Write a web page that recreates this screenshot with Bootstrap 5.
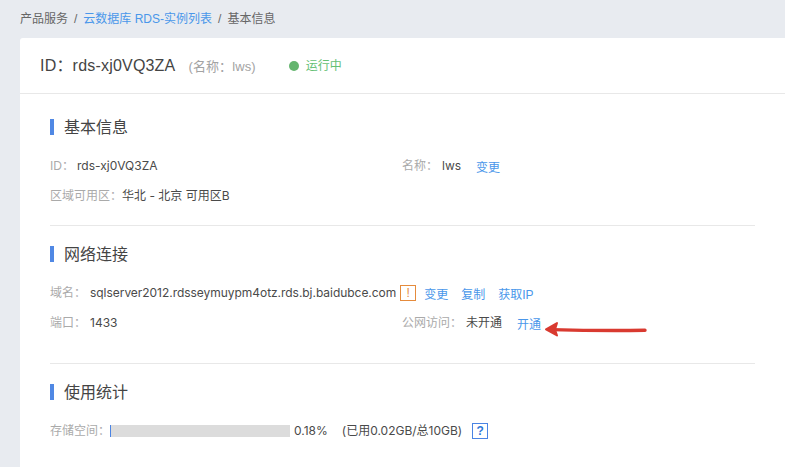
<!DOCTYPE html>
<html lang="zh">
<head>
<meta charset="utf-8">
<title>基本信息</title>
<link rel="stylesheet" href="https://cdn.jsdelivr.net/npm/bootstrap@5.3.0/dist/css/bootstrap.min.css">
<style>
html,body{height:467px;overflow:hidden}
body{background:#e8ebf0;font-family:"Liberation Sans","Noto Sans CJK SC",sans-serif;font-size:12px;color:#444;position:relative}
a{color:#4a97ea;text-decoration:none}
.crumbs{height:38px;padding-left:20px;align-items:center;color:#666;margin:0;padding-bottom:1px}
.crumbs .sep{margin:0 6px;color:#666}
.panel{margin-left:20px;width:800px;height:440px;background:#fff;border-radius:3px 0 0 0}
.panel-top{height:56px;border-bottom:1px solid #e8e8e8;padding-left:20px;align-items:center}
.rid{font-size:16px;color:#444;letter-spacing:.2px}
.rname{font-size:13px;color:#a3a3a3;margin-left:13px;padding-top:3px;letter-spacing:.1px}
.dot{width:10px;height:10px;border-radius:50%;background:#64b56e;margin-left:33px;margin-right:7px}
.run{color:#64c074;font-size:12px}
.panel-body{padding:0 30px;width:765px}
.sec{border-bottom:1px solid #e8e8e8}
.sec-h{font-size:16px;color:#444;border-left:4px solid #5088e4;height:16px;line-height:18px;padding-left:10px}
.s1{height:132px;padding-top:25px}
.s2{height:138px;padding-top:20px}
.s3{padding-top:20px;border:0}
.info{margin-top:22px;height:18px;line-height:18px;align-items:center}
.info+.info{margin-top:12px}
.half{width:352px;flex:none;align-items:center}
.lbl{color:#aaa}
.val{font-family:Inter,"Noto Sans CJK SC",sans-serif;color:#4a4a4a}
.gap-l{margin-left:4px}
.gap-id{margin-left:3px}
.gap-used{margin-left:14px}
.domain{letter-spacing:-.04px}
.warn{width:16px;height:16px;border:1px solid #e58b3c;color:#e58b3c;text-align:center;line-height:14px;font-size:12px;margin:0 8px 0 4px}
.lnk{margin-right:13px;position:relative;top:2px}
.lnk-side{margin-left:15px}
.track{width:180px;height:12px;background:#dcdcdc;margin-right:4px}
.fill{height:12px;width:1px;background:#4a84e4}
.help{width:16px;height:16px;border:1px solid #4a84e4;color:#2f78d8;text-align:center;line-height:15px;font-weight:700;font-size:12px;margin-left:10px}
.pointer{position:absolute;left:540px;top:318px}
</style>
</head>
<body>
<nav class="crumbs d-flex"><span>产品服务</span><span class="sep">/</span><a href="#">云数据库 RDS-实例列表</a><span class="sep">/</span><span>基本信息</span></nav>
<main class="panel">
  <header class="panel-top d-flex">
    <span class="rid">ID：rds-xj0VQ3ZA</span>
    <span class="rname">(名称：lws)</span>
    <span class="dot"></span>
    <span class="run">运行中</span>
  </header>
  <div class="panel-body">
    <section class="sec s1">
      <div class="sec-h">基本信息</div>
      <div class="info d-flex">
        <div class="half d-flex"><span class="lbl">ID：</span><span class="val gap-id">rds-xj0VQ3ZA</span></div>
        <div class="half d-flex"><span class="lbl">名称：</span><span class="val gap-l">lws</span><a class="lnk lnk-side" href="#">变更</a></div>
      </div>
      <div class="info d-flex">
        <div class="half d-flex"><span class="lbl">区域可用区：</span><span class="val">华北 - 北京 可用区B</span></div>
      </div>
    </section>
    <section class="sec s2">
      <div class="sec-h">网络连接</div>
      <div class="info d-flex">
        <span class="lbl">域名：</span><span class="val domain gap-l">sqlserver2012.rdsseymuypm4otz.rds.bj.baidubce.com</span>
        <span class="warn">!</span><a class="lnk" href="#">变更</a><a class="lnk" href="#">复制</a><a class="lnk" href="#">获取IP</a>
      </div>
      <div class="info d-flex">
        <div class="half d-flex"><span class="lbl">端口：</span><span class="val gap-l">1433</span></div>
        <div class="half d-flex"><span class="lbl">公网访问：</span><span class="val gap-l">未开通</span><a class="lnk lnk-side" href="#">开通</a></div>
      </div>
    </section>
    <section class="sec s3">
      <div class="sec-h">使用统计</div>
      <div class="info d-flex">
        <span class="lbl">存储空间：</span>
        <div class="track"><div class="fill"></div></div>
        <span class="val">0.18%</span><span class="val gap-used">(已用0.02GB/总10GB)</span>
        <span class="help">?</span>
      </div>
    </section>
  </div>
</main>
<svg class="pointer" width="110" height="24" viewBox="0 0 110 24" aria-hidden="true">
  <path d="M105 12.3 C80 12.6 40 12.4 12 11.6" fill="none" stroke="#d93a30" stroke-width="3.4" stroke-linecap="round"/>
  <path d="M6 11.3 L17 5 L15 11.5 L17 17.5 Z" fill="#d93a30" stroke="#d93a30" stroke-width="2" stroke-linejoin="round"/>
</svg>
</body>
</html>
